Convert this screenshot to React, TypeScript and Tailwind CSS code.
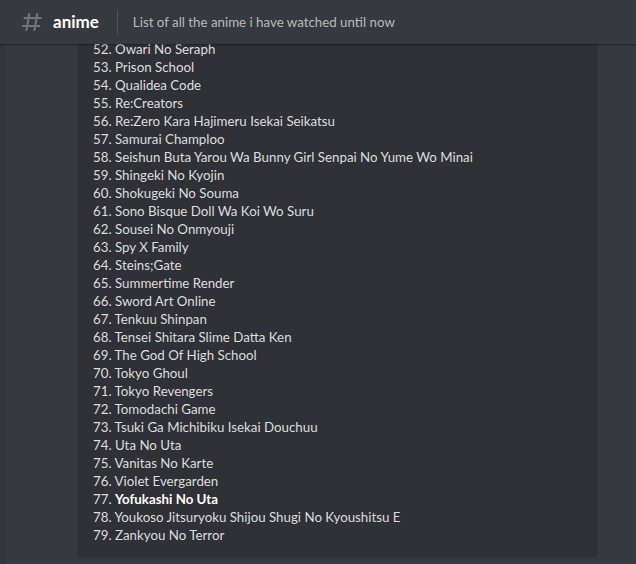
import React from 'react';

const items = [
  'Owari No Seraph',
  'Prison School',
  'Qualidea Code',
  'Re:Creators',
  'Re:Zero Kara Hajimeru Isekai Seikatsu',
  'Samurai Champloo',
  'Seishun Buta Yarou Wa Bunny Girl Senpai No Yume Wo Minai',
  'Shingeki No Kyojin',
  'Shokugeki No Souma',
  'Sono Bisque Doll Wa Koi Wo Suru',
  'Sousei No Onmyouji',
  'Spy X Family',
  'Steins;Gate',
  'Summertime Render',
  'Sword Art Online',
  'Tenkuu Shinpan',
  'Tensei Shitara Slime Datta Ken',
  'The God Of High School',
  'Tokyo Ghoul',
  'Tokyo Revengers',
  'Tomodachi Game',
  'Tsuki Ga Michibiku Isekai Douchuu',
  'Uta No Uta',
  'Vanitas No Karte',
  'Violet Evergarden',
  'Yofukashi No Uta',
  'Youkoso Jitsuryoku Shijou Shugi No Kyoushitsu E',
  'Zankyou No Terror',
];

function HashIcon() {
  return (
    <svg width="24" height="24" viewBox="0 0 24 24" className="text-[#72767d]">
      <path
        fill="currentColor"
        fillRule="evenodd"
        d="M5.88657 21C5.57547 21 5.3399 20.7189 5.39427 20.4126L6.00001 17H2.59511C2.28449 17 2.04905 16.7198 2.10259 16.4138L2.27759 15.4138C2.31946 15.1746 2.52722 15 2.77011 15H6.35001L7.41001 9H4.00511C3.69449 9 3.45905 8.71977 3.51259 8.41381L3.68759 7.41381C3.72946 7.17456 3.93722 7 4.18011 7H7.76001L8.39677 3.41262C8.43914 3.17391 8.64664 3 8.88907 3H9.87344C10.1845 3 10.4201 3.28107 10.3657 3.58738L9.76001 7H15.76L16.3968 3.41262C16.4391 3.17391 16.6466 3 16.8891 3H17.8734C18.1845 3 18.4201 3.28107 18.3657 3.58738L17.76 7H21.1649C21.4755 7 21.711 7.28023 21.6574 7.58619L21.4824 8.58619C21.4406 8.82544 21.2328 9 20.9899 9H17.41L16.35 15H19.7549C20.0655 15 20.301 15.2802 20.2474 15.5862L20.0724 16.5862C20.0306 16.8254 19.8228 17 19.5799 17H16L15.3632 20.5874C15.3209 20.8261 15.1134 21 14.8709 21H13.8866C13.5755 21 13.3399 20.7189 13.3943 20.4126L14 17H8.00001L7.36325 20.5874C7.32088 20.8261 7.11337 21 6.87094 21H5.88657ZM9.41045 9L8.35045 15H14.3504L15.4104 9H9.41045Z"
      />
    </svg>
  );
}

export default function App() {
  return (
    <div
      className="w-[636px] h-[564px] bg-[#36393f] flex flex-col overflow-hidden"
      style={{ fontFamily: 'Lato, "Noto Sans", sans-serif' }}
    >
      {/* Channel header */}
      <div className="relative z-10 h-[44px] flex-shrink-0 flex items-center pl-[20px] bg-[#36393f] shadow-[0_1px_0_rgba(4,4,5,0.2),0_1.5px_0_rgba(6,6,7,0.05),0_2px_0_rgba(4,4,5,0.05)]">
        <HashIcon />
        <span className="ml-[9px] text-[17px] font-bold text-white leading-5">anime</span>
        <div className="ml-[18px] w-px h-6 bg-[#4f545c]" />
        <span className="ml-[15px] text-[13.3px] text-[#b9bbbe] leading-5">
          List of all the anime i have watched until now
        </span>
      </div>

      {/* Messages */}
      <div className="flex-1 flex overflow-hidden">
        <div className="w-[5px] bg-[#32353a]" />
        <div className="flex-1 overflow-hidden">
          <div className="ml-[72px] w-[520px] -mt-[4px] bg-[#2f3136] rounded-b-[4px] pl-[16px] pb-[14px]">
            {items.map((name, i) => {
              const n = 52 + i;
              const bold = n === 77;
              return (
                <div key={n} className="text-[13.3px] leading-[18px] text-[#dcddde] whitespace-nowrap">
                  {n}.{' '}
                  {bold ? <span className="font-bold text-white">{name}</span> : name}
                </div>
              );
            })}
          </div>
        </div>
      </div>
    </div>
  );
}
